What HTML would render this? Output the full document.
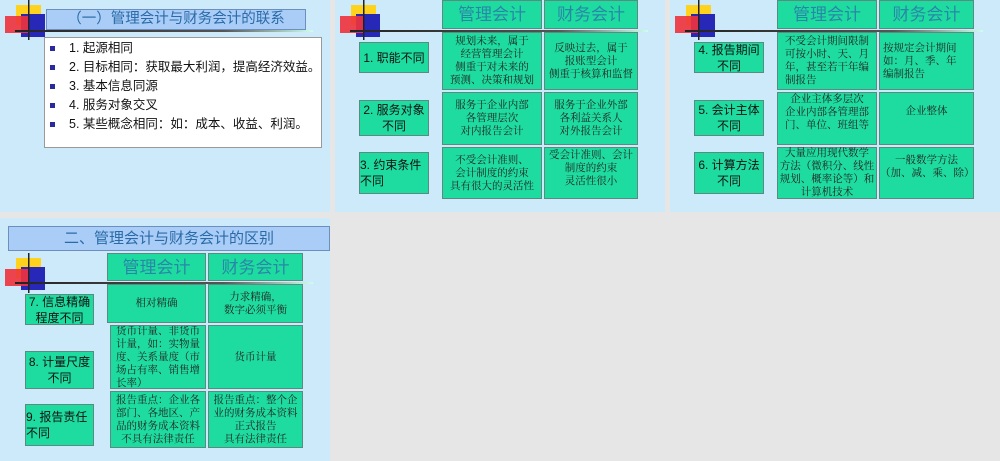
<!DOCTYPE html>
<html><head><meta charset="utf-8"><style>
body{margin:0;width:1000px;height:461px;background:#e6e6e6;position:relative;overflow:hidden;font-family:"Liberation Sans","Noto Sans CJK SC",sans-serif;}
.s{position:absolute;background:#cdeafb;}
.a{position:absolute;box-sizing:border-box;}
.c{position:absolute;box-sizing:border-box;background:#1edc9f;border:1px solid #5a8a80;display:flex;align-items:center;justify-content:center;text-align:center;font-family:"Liberation Serif","Noto Serif CJK SC",serif;font-size:10.5px;line-height:13px;color:#222;}
.h{font-family:"Liberation Sans","Noto Sans CJK SC",sans-serif;font-size:17px;color:#2a86a8;}
.l{font-family:"Liberation Sans","Noto Sans CJK SC",sans-serif;font-size:12px;line-height:16px;color:#111;}
.lg{position:absolute;width:45px;height:40px;}
.ln{position:absolute;height:2px;background:linear-gradient(90deg,#222,#555 70%,#cfe);}
ul{margin:0;padding:0;list-style:none}
li{position:relative;padding-left:24px;font-size:12.5px;line-height:19px;color:#111;}
li:before{content:"";position:absolute;left:5px;top:7px;width:5px;height:5px;background:#2a2aa0;}
</style></head><body>
<div class="s" style="left:0;top:0;width:330px;height:212px"></div>
<div class="s" style="left:335px;top:0;width:330px;height:212px"></div>
<div class="s" style="left:670px;top:0;width:330px;height:212px"></div>
<div class="s" style="left:0;top:218px;width:330px;height:243px"></div>

<svg class="lg" style="left:3px;top:0" viewBox="0 0 45 40"><rect x="13" y="5" width="25" height="20" fill="#ffd21e"/><rect x="18" y="14" width="24" height="23" fill="#2828b8"/><rect x="2" y="16" width="24" height="17" fill="#f0323c" opacity=".9"/><rect x="25" y="0" width="1.5" height="40" fill="#222"/></svg>
<svg class="lg" style="left:338px;top:0" viewBox="0 0 45 40"><rect x="13" y="5" width="25" height="20" fill="#ffd21e"/><rect x="18" y="14" width="24" height="23" fill="#2828b8"/><rect x="2" y="16" width="24" height="17" fill="#f0323c" opacity=".9"/><rect x="25" y="0" width="1.5" height="40" fill="#222"/></svg>
<svg class="lg" style="left:673px;top:0" viewBox="0 0 45 40"><rect x="13" y="5" width="25" height="20" fill="#ffd21e"/><rect x="18" y="14" width="24" height="23" fill="#2828b8"/><rect x="2" y="16" width="24" height="17" fill="#f0323c" opacity=".9"/><rect x="25" y="0" width="1.5" height="40" fill="#222"/></svg>
<svg class="lg" style="left:3px;top:253px" viewBox="0 0 45 40"><rect x="13" y="5" width="25" height="20" fill="#ffd21e"/><rect x="18" y="14" width="24" height="23" fill="#2828b8"/><rect x="2" y="16" width="24" height="17" fill="#f0323c" opacity=".9"/><rect x="25" y="0" width="1.5" height="40" fill="#222"/></svg>

<div class="a" style="left:46px;top:9px;width:260px;height:21px;background:#a9cdf6;border:1px solid #6d8fc0;text-align:center;font-size:14.5px;line-height:19px;color:#2a6aa8">（一）管理会计与财务会计的联系</div>
<div class="ln" style="left:15px;top:30px;width:298px"></div>
<div class="a" style="left:44px;top:37px;width:278px;height:111px;background:#fff;border:1px solid #999;padding-top:1px">
<ul><li>1. 起源相同</li><li>2. 目标相同：获取最大利润，提高经济效益。</li><li>3. 基本信息同源</li><li>4. 服务对象交叉</li><li>5. 某些概念相同：如：成本、收益、利润。</li></ul></div>

<div class="c h" style="left:442px;top:0;width:100px;height:29px">管理会计</div>
<div class="c h" style="left:544px;top:0;width:94px;height:29px">财务会计</div>
<div class="ln" style="left:350px;top:30px;width:298px"></div>
<div class="c" style="left:442px;top:32px;width:100px;height:58px">规划未来，属于<br>经营管理会计<br>侧重于对未来的<br>预测、决策和规划</div>
<div class="c" style="left:544px;top:32px;width:94px;height:58px">反映过去，属于<br>报账型会计<br>侧重于核算和监督</div>
<div class="c" style="left:442px;top:92px;width:100px;height:53px">服务于企业内部<br>各管理层次<br>对内报告会计</div>
<div class="c" style="left:544px;top:92px;width:94px;height:53px">服务于企业外部<br>各利益关系人<br>对外报告会计</div>
<div class="c" style="left:442px;top:147px;width:100px;height:52px">不受会计准则、<br>会计制度的约束<br>具有很大的灵活性</div>
<div class="c" style="left:544px;top:147px;width:94px;height:52px;align-items:flex-start;padding-top:1px">受会计准则、会计<br>制度的约束<br>灵活性很小</div>
<div class="c l" style="left:359px;top:42px;width:70px;height:31px">1. 职能不同</div>
<div class="c l" style="left:359px;top:100px;width:70px;height:36px">2. 服务对象<br>不同</div>
<div class="c l" style="left:359px;top:152px;width:70px;height:42px;text-align:left;justify-content:flex-start">3. 约束条件<br>不同</div>

<div class="c h" style="left:777px;top:0;width:100px;height:29px">管理会计</div>
<div class="c h" style="left:879px;top:0;width:95px;height:29px">财务会计</div>
<div class="ln" style="left:685px;top:30px;width:298px"></div>
<div class="c" style="left:777px;top:32px;width:100px;height:58px;text-align:left">不受会计期间限制<br>可按小时、天、月<br>年，甚至若干年编<br>制报告</div>
<div class="c" style="left:879px;top:32px;width:95px;height:58px;text-align:left;justify-content:flex-start;padding-left:3px">按规定会计期间<br>如：月、季、年<br>编制报告</div>
<div class="c" style="left:777px;top:92px;width:100px;height:53px;align-items:flex-start">企业主体多层次<br>企业内部各管理部<br>门、单位、班组等</div>
<div class="c" style="left:879px;top:92px;width:95px;height:53px;align-items:flex-start;padding-top:12px">企业整体</div>
<div class="c" style="left:777px;top:147px;width:100px;height:52px">大量应用现代数学<br>方法（微积分、线性<br>规划、概率论等）和<br>计算机技术</div>
<div class="c" style="left:879px;top:147px;width:95px;height:52px;align-items:flex-start;padding-top:6px">一般数学方法<br>（加、减、乘、除）</div>
<div class="c l" style="left:694px;top:42px;width:70px;height:31px">4. 报告期间<br>不同</div>
<div class="c l" style="left:694px;top:100px;width:70px;height:36px">5. 会计主体<br>不同</div>
<div class="c l" style="left:694px;top:152px;width:70px;height:42px">6. 计算方法<br>不同</div>

<div class="a" style="left:8px;top:226px;width:322px;height:25px;background:#a9cdf6;border:1px solid #6d8fc0;text-align:center;font-size:15px;line-height:23px;color:#2a6aa8">二、管理会计与财务会计的区别</div>
<div class="c h" style="left:107px;top:253px;width:99px;height:28px">管理会计</div>
<div class="c h" style="left:208px;top:253px;width:95px;height:28px">财务会计</div>
<div class="ln" style="left:15px;top:282px;width:298px"></div>
<div class="c" style="left:107px;top:284px;width:99px;height:39px">相对精确</div>
<div class="c" style="left:208px;top:284px;width:95px;height:39px">力求精确，<br>数字必须平衡</div>
<div class="c" style="left:110px;top:325px;width:96px;height:64px;text-align:left;overflow:hidden">货币计量、非货币<br>计量，如：实物量<br>度、关系量度（市<br>场占有率、销售增<br>长率）</div>
<div class="c" style="left:208px;top:325px;width:95px;height:64px">货币计量</div>
<div class="c" style="left:110px;top:391px;width:96px;height:57px">报告重点：企业各<br>部门、各地区、产<br>品的财务成本资料<br>不具有法律责任</div>
<div class="c" style="left:208px;top:391px;width:95px;height:57px">报告重点：整个企<br>业的财务成本资料<br>正式报告<br>具有法律责任</div>
<div class="c l" style="left:25px;top:294px;width:69px;height:31px">7. 信息精确<br>程度不同</div>
<div class="c l" style="left:25px;top:351px;width:69px;height:38px">8. 计量尺度<br>不同</div>
<div class="c l" style="left:25px;top:404px;width:69px;height:42px;text-align:left;justify-content:flex-start">9. 报告责任<br>不同</div>
</body></html>
